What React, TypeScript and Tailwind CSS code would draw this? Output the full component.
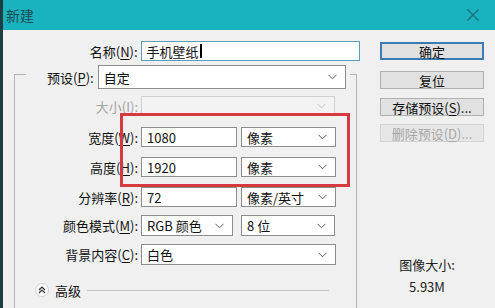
const FONT = "font-['Microsoft_YaHei','Noto_Sans_CJK_SC',sans-serif]";

function Chevron({ disabled = false }: { disabled?: boolean }) {
  return (
    <svg width="9" height="6" viewBox="0 0 9 6" className="shrink-0">
      <path d="M0.5 0.8 L4.5 4.8 L8.5 0.8" fill="none" stroke={disabled ? "#c4c4c4" : "#5a5a5a"} strokeWidth="1" />
    </svg>
  );
}

function Select({ value, w, h = "h-[20px]", disabled = false }: { value: string; w: string; h?: string; disabled?: boolean }) {
  return (
    <div
      className={`${w} ${h} flex items-center justify-between pl-[5px] pr-[8px] border ${
        disabled ? "border-[#d0d0d0] bg-[#f3f3f3]" : "border-[#8c8c8c] bg-white"
      }`}
    >
      <span className="text-[13px] leading-none">{value}</span>
      <Chevron disabled={disabled} />
    </div>
  );
}

function Input({ value, w }: { value: string; w: string }) {
  return (
    <div className={`${w} h-[20px] flex items-center pl-[5px] border border-[#8c8c8c] bg-white`}>
      <span className="text-[13px] leading-none">{value}</span>
    </div>
  );
}

function Label({ text, hot, rest = "):", disabled = false }: { text: string; hot: string; rest?: string; disabled?: boolean }) {
  return (
    <div className={`w-[123px] text-right text-[13px] leading-none ${disabled ? "text-[#a3a3a3]" : "text-[#111]"}`}>
      {text}(<span className="underline underline-offset-2">{hot}</span>{rest}
    </div>
  );
}

function Button({ children, primary = false, disabled = false }: { children: React.ReactNode; primary?: boolean; disabled?: boolean }) {
  return (
    <div
      className={`w-[104px] h-[18px] flex items-center justify-center text-[13px] leading-none ${
        primary
          ? "border-2 border-[#3b7db3] bg-[#e1e1e1] text-[#111]"
          : disabled
          ? "border border-[#d4d4d4] bg-[#e6e6e6] text-[#a8a8a8]"
          : "border border-[#b0b0b0] bg-[#e1e1e1] text-[#111]"
      }`}
    >
      {children}
    </div>
  );
}

export default function App() {
  return (
    <div className={`${FONT} relative w-[495px] h-[308px] overflow-hidden flex flex-col bg-[#f0f0f0] border-l-[3px] border-[#1e3d44] text-[#111]`}>
      {/* title bar */}
      <div className="h-[30px] shrink-0 flex items-center justify-between pl-[3px] pr-[16px] bg-[#19b3bf]">
        <span className="text-[14px] text-[#1f4a52]">新建</span>
        <svg width="12" height="12" viewBox="0 0 12 12">
          <path d="M0.5 0.5 L11.5 11.5 M11.5 0.5 L0.5 11.5" stroke="#1d6d76" strokeWidth="1.3" />
        </svg>
      </div>

      <div className="flex flex-1 min-h-0">
        {/* form column */}
        <div className="w-[357px] flex flex-col pt-[11px]">
          <div className="flex items-center">
            <div className="w-[135px] text-right text-[13px] leading-none">
              名称(<span className="underline underline-offset-2">N</span>):
            </div>
            <div className="ml-[3px] w-[220px] h-[20px] flex items-center pl-[5px] border border-[#5b9fb4] bg-white">
              <span className="text-[13px] leading-none">手机壁纸</span>
              <span className="w-[2px] h-[14px] bg-black ml-[1px]" />
            </div>
          </div>

          <fieldset className="ml-[11px] w-[343px] flex-1 -mt-[2px] border border-b-0 border-[#b4b4b4] px-0">
            <legend className="ml-[11px] pt-[6px] pl-[21px] pr-[4px]">
              <div className="flex items-center">
                <span className="text-[13px] leading-none">
                  预设(<span className="underline underline-offset-2">P</span>):
                </span>
                <div className="ml-[4px]">
                  <Select value="自定" w="w-[248px]" h="h-[24px]" />
                </div>
              </div>
            </legend>

            <div className="flex flex-col pt-[7px]">
              <div className="flex items-center h-[20px]">
                <Label text="大小" hot="I" disabled />
                <div className="ml-[3px]">
                  <Select value="" w="w-[194px]" disabled />
                </div>
              </div>

              <div className="flex items-center h-[20px] mt-[11px]">
                <Label text="宽度" hot="W" />
                <div className="ml-[3px] flex gap-[4px]">
                  <Input value="1080" w="w-[96px]" />
                  <Select value="像素" w="w-[95px]" />
                </div>
              </div>

              <div className="flex items-center h-[20px] mt-[10px]">
                <Label text="高度" hot="H" />
                <div className="ml-[3px] flex gap-[4px]">
                  <Input value="1920" w="w-[96px]" />
                  <Select value="像素" w="w-[95px]" />
                </div>
              </div>

              <div className="flex items-center h-[20px] mt-[10px]">
                <Label text="分辨率" hot="R" />
                <div className="ml-[3px] flex gap-[4px]">
                  <Input value="72" w="w-[96px]" />
                  <Select value="像素/英寸" w="w-[95px]" />
                </div>
              </div>

              <div className="flex items-center h-[21px] mt-[8px]">
                <Label text="颜色模式" hot="M" />
                <div className="ml-[3px] flex gap-[8px]">
                  <Select value="RGB 颜色" w="w-[92px]" h="h-[21px]" />
                  <Select value="8 位" w="w-[94px]" h="h-[21px]" />
                </div>
              </div>

              <div className="flex items-center h-[21px] mt-[8px]">
                <Label text="背景内容" hot="C" />
                <div className="ml-[3px]">
                  <Select value="白色" w="w-[195px]" h="h-[21px]" />
                </div>
              </div>

              <div className="flex items-center h-[16px] mt-[17px] pl-[20px]">
                <div className="w-[14px] h-[14px] rounded-full bg-[#fafafa] border border-[#d0d0d0] flex items-center justify-center">
                  <svg width="8" height="8" viewBox="0 0 8 8">
                    <path d="M1 4 L4 1 L7 4 M1 7 L4 4 L7 7" fill="none" stroke="#333" strokeWidth="1.2" />
                  </svg>
                </div>
                <span className="ml-[6px] text-[13px] leading-none">高级</span>
                <div className="ml-[6px] w-[242px] h-px bg-[#c4c4c4]" />
              </div>
            </div>
          </fieldset>
        </div>

        {/* buttons column */}
        <div className="flex-1 flex flex-col pl-[20px] pt-[12px] pb-[10px]">
          <Button primary>确定</Button>
          <div className="mt-[11px]">
            <Button>复位</Button>
          </div>
          <div className="mt-[9px]">
            <Button>
              存储预设(<span className="underline underline-offset-2">S</span>)...
            </Button>
          </div>
          <div className="mt-[8px]">
            <Button disabled>
              删除预设(<span className="underline underline-offset-2">D</span>)...
            </Button>
          </div>
          <div className="mt-auto w-[104px] pr-[10px] text-center text-[13px] leading-[22px] text-[#222]">
            <div>图像大小:</div>
            <div>5.93M</div>
          </div>
        </div>
      </div>

      {/* red annotation box */}
      <div className="absolute left-[117px] top-[113px] w-[230px] h-[74px] border-[3px] border-[#d63a40]" />
    </div>
  );
}
